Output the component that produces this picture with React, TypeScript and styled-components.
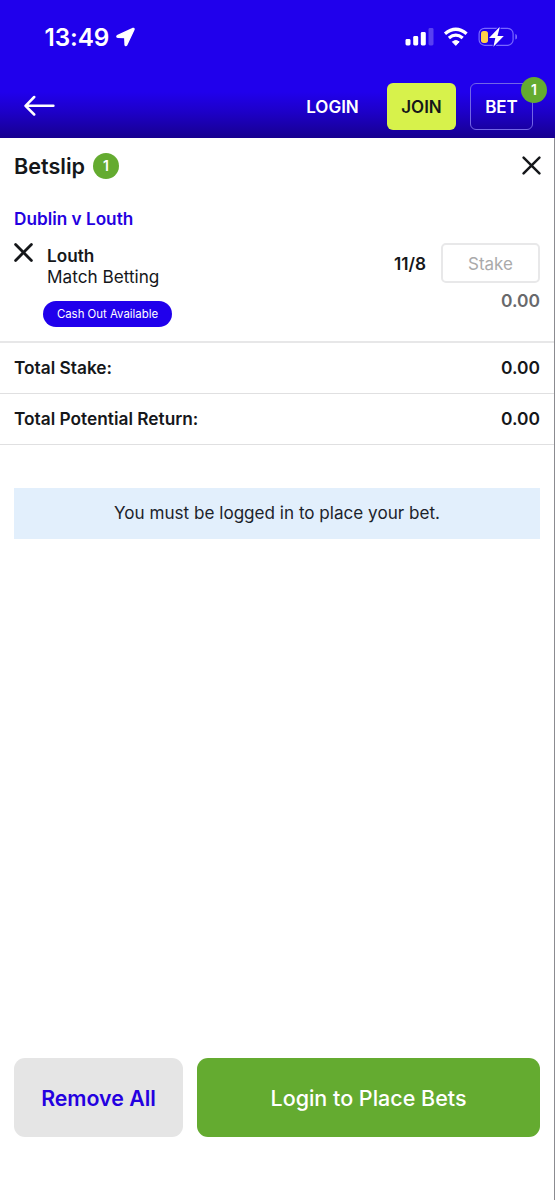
import React from "react";
import styled, { createGlobalStyle } from "styled-components";

const GlobalStyle = createGlobalStyle`
  * { box-sizing: border-box; }
  body { margin: 0; background: #fff; font-family: Inter, "Liberation Sans", sans-serif; }
  button, input { font-family: inherit; }
`;

const Screen = styled.div`
  display: flex;
  flex-direction: column;
  width: 555px;
  height: 1200px;
  background: #fff;
  color: #15171a;
  overflow: hidden;
`;

const Header = styled.header`
  height: 138px;
  flex: none;
  background: linear-gradient(#2000ec 0, #2000ec 92px, #1d00c8 112px, #17008f 138px);
  color: #fff;
`;

const StatusBar = styled.div`
  display: flex;
  align-items: center;
  justify-content: space-between;
  height: 74px;
  padding: 0 38px 0 44px;
`;

const StatusGroup = styled.div`
  display: flex;
  align-items: center;
`;

const Clock = styled.span`
  width: 71px;
  padding-left: 0.5px;
  font-size: 24.3px;
  line-height: 30px;
  font-weight: 600;
  letter-spacing: -0.1px;
  white-space: nowrap;
`;

const NavBar = styled.nav`
  display: flex;
  align-items: center;
  height: 64px;
  padding: 0 22px 0 24px;
`;

const BackButton = styled.button`
  display: flex;
  margin-right: auto;
  padding: 0;
  border: 0;
  background: none;
`;

const NavButton = styled.button<{ $kind: "text" | "lime" | "outline" }>`
  position: relative;
  height: 47px;
  width: ${(p) => (p.$kind === "text" ? 53 : p.$kind === "lime" ? 69 : 63)}px;
  margin-left: ${(p) => (p.$kind === "lime" ? 28 : p.$kind === "outline" ? 14 : 0)}px;
  padding: 1px 0 0;
  border: ${(p) => (p.$kind === "outline" ? "1px solid #7265e6" : "0")};
  border-radius: 6px;
  background: ${(p) => (p.$kind === "lime" ? "#d7f24b" : "transparent")};
  color: ${(p) => (p.$kind === "lime" ? "#15171a" : "#fff")};
  font-size: 17px;
  font-weight: 600;
  white-space: nowrap;
`;

const Count = styled.span`
  display: flex;
  align-items: center;
  justify-content: center;
  width: 26px;
  height: 26px;
  padding-bottom: 1px;
  border-radius: 50%;
  background: #64ab30;
  color: #fff;
  font-size: 14px;
  font-weight: 600;
`;

const CornerCount = styled(Count)`
  position: absolute;
  top: -7px;
  right: -15px;
`;

const Body = styled.main`
  display: flex;
  flex: 1;
  flex-direction: column;
  border-right: 1px solid #8b8b90;
`;

const TitleRow = styled.div`
  display: flex;
  align-items: center;
  height: 55px;
  padding: 0 13px 0 14px;
`;

const Title = styled.h1`
  width: 79px;
  margin: 0;
  font-size: 21.6px;
  font-weight: 600;
  white-space: nowrap;
`;

const IconButton = styled.button<{ $push?: boolean }>`
  display: flex;
  flex: none;
  padding: 0;
  border: 0;
  background: none;
  color: inherit;
  margin-left: ${(p) => (p.$push ? "auto" : "0")};
`;

const Selection = styled.section`
  height: 150px;
  padding: 15px 14px 0;
  border-bottom: 2px solid #e7e7e8;
`;

const EventName = styled.h2`
  margin: 0 0 13px;
  color: #2400e0;
  font-size: 17.2px;
  line-height: 22px;
  font-weight: 600;
`;

const SelectionRow = styled.div`
  display: flex;
  align-items: flex-start;
`;

const Pick = styled.div`
  display: flex;
  flex-direction: column;
  align-items: flex-start;
  margin-left: 10px;
  padding-top: 2px;
  font-size: 17.2px;
  line-height: 21px;
`;

const PickText = styled.span<{ $bold?: boolean }>`
  padding-left: 4px;
  font-weight: ${(p) => (p.$bold ? 600 : 400)};
`;

const CashOut = styled.span`
  display: flex;
  align-items: center;
  justify-content: center;
  width: 129px;
  height: 26px;
  margin-top: 14px;
  border-radius: 13px;
  background: #2000ec;
  color: #fff;
  font-size: 11.4px;
  white-space: nowrap;
`;

const Odds = styled.span`
  margin: 10px 15px 0 auto;
  font-size: 17.2px;
  line-height: 22px;
  font-weight: 600;
`;

const StakeColumn = styled.div`
  display: flex;
  flex-direction: column;
  align-items: flex-end;
`;

const StakeInput = styled.input`
  width: 99px;
  height: 40px;
  padding: 1px 0 0;
  border: 2px solid #e8e8e9;
  border-radius: 5px;
  background: #fff;
  font-size: 17px;
  text-align: center;
  &::placeholder { color: #aaa; opacity: 1; }
`;

const Amount = styled.span<{ $muted?: boolean }>`
  margin-top: ${(p) => (p.$muted ? 7 : 0)}px;
  color: ${(p) => (p.$muted ? "#68696c" : "inherit")};
  font-size: 17.4px;
  line-height: 22px;
  font-weight: 600;
`;

const TotalRow = styled.div`
  display: flex;
  align-items: center;
  justify-content: space-between;
  height: 51px;
  padding: 0 14px;
  border-bottom: 1.5px solid #e0e0e1;
  font-size: 17.3px;
  line-height: 22px;
  font-weight: 600;
`;

const Notice = styled.p`
  display: flex;
  align-items: center;
  justify-content: center;
  height: 51px;
  margin: 43px 14px 0;
  padding-bottom: 2px;
  background: #e2effc;
  color: #1c232b;
  font-size: 17.1px;
  line-height: 21px;
`;

const Actions = styled.footer`
  display: flex;
  gap: 14px;
  margin-top: auto;
  padding: 0 14px 63px;
`;

const ActionButton = styled.button<{ $primary?: boolean }>`
  flex: ${(p) => (p.$primary ? "1" : "0 0 169px")};
  height: 79px;
  padding: 1px 0 0;
  border: 0;
  border-radius: 11px;
  background: ${(p) => (p.$primary ? "#64ab30" : "#e5e5e5")};
  color: ${(p) => (p.$primary ? "#fff" : "#2400e0")};
  font-size: ${(p) => (p.$primary ? 21.5 : 21.3)}px;
  font-weight: ${(p) => (p.$primary ? 500 : 600)};
  white-space: nowrap;
`;

const LocationIcon = () => (
  <svg width="20" height="20" viewBox="0 0 20 20">
    <path d="M18 1.5 2.3 8.7q-1 .9.3 1.5l7.2.4.3 7.3q.6 1.3 1.5.2L19 2.5q.2-1.4-1-1Z" fill="#fff" stroke="#fff" strokeWidth="1.4" strokeLinejoin="round" />
  </svg>
);

const StatusIcons = () => (
  <svg width="113" height="24" viewBox="0 0 113 24">
    <g fill="#fff">
      <rect x="1.5" y="14" width="5" height="6.5" rx="1.4" />
      <rect x="9.2" y="11" width="5" height="9.5" rx="1.4" />
      <rect x="16.8" y="7" width="5" height="13.5" rx="1.4" />
      <rect x="24.5" y="3" width="5" height="17.5" rx="1.4" opacity=".25" />
      <path d="m51.8 20.4-3.4-3.6q3.4-2.7 6.8 0Z" strokeLinejoin="round" stroke="#fff" />
    </g>
    <g fill="none" stroke="#fff" strokeWidth="3.3">
      <path d="M41 8.8q10.8-9 21.6 0" />
      <path d="M44.9 13q6.9-5.8 13.8 0" />
    </g>
    <rect x="75.1" y="3.3" width="34" height="17" rx="5.5" fill="none" stroke="#7968ff" strokeWidth="1.2" />
    <path d="M111.3 9q2 .7 2 2.8t-2 2.8Z" fill="#7968ff" />
    <rect x="77" y="6" width="7" height="12" rx="2.7" fill="#ffd04a" />
    <path d="M95.3 2.3 85 13h6.3L89.4 21.7 99.8 10.9h-6.3L95.7 2.5Z" fill="#fff" stroke="#2000ec" strokeWidth="2" paintOrder="stroke" strokeLinejoin="round" />
  </svg>
);

const BackArrow = () => (
  <svg width="32" height="22" viewBox="0 0 32 22" fill="none" stroke="#fff" strokeWidth="2.5" strokeLinecap="round" strokeLinejoin="round">
    <path d="M10.2 2 1.5 10.8l8.7 8.7M2 10.8h27.4" />
  </svg>
);

const Cross = ({ width = 2.5 }: { width?: number }) => (
  <svg width="19" height="19" viewBox="0 0 19 19" fill="none" stroke="currentColor" strokeWidth={width} strokeLinecap="round">
    <path d="m1.6 1.6 15.8 15.8M17.4 1.6 1.6 17.4" />
  </svg>
);

export default function App() {
  return (
    <Screen>
      <GlobalStyle />
      <Header>
        <StatusBar>
          <StatusGroup>
            <Clock>13:49</Clock>
            <LocationIcon />
          </StatusGroup>
          <StatusGroup>
            <StatusIcons />
          </StatusGroup>
        </StatusBar>
        <NavBar>
          <BackButton aria-label="Back"><BackArrow /></BackButton>
          <NavButton $kind="text">LOGIN</NavButton>
          <NavButton $kind="lime">JOIN</NavButton>
          <NavButton $kind="outline">
            BET
            <CornerCount>1</CornerCount>
          </NavButton>
        </NavBar>
      </Header>
      <Body>
        <TitleRow>
          <Title>Betslip</Title>
          <Count>1</Count>
          <IconButton $push aria-label="Close"><Cross /></IconButton>
        </TitleRow>
        <Selection>
          <EventName>Dublin v Louth</EventName>
          <SelectionRow>
            <IconButton aria-label="Remove selection"><Cross width={2.8} /></IconButton>
            <Pick>
              <PickText $bold>Louth</PickText>
              <PickText>Match Betting</PickText>
              <CashOut>Cash Out Available</CashOut>
            </Pick>
            <Odds>11/8</Odds>
            <StakeColumn>
              <StakeInput placeholder="Stake" />
              <Amount $muted>0.00</Amount>
            </StakeColumn>
          </SelectionRow>
        </Selection>
        <TotalRow>
          <span>Total Stake:</span>
          <Amount>0.00</Amount>
        </TotalRow>
        <TotalRow>
          <span>Total Potential Return:</span>
          <Amount>0.00</Amount>
        </TotalRow>
        <Notice>You must be logged in to place your bet.</Notice>
        <Actions>
          <ActionButton>Remove All</ActionButton>
          <ActionButton $primary>Login to Place Bets</ActionButton>
        </Actions>
      </Body>
    </Screen>
  );
}
